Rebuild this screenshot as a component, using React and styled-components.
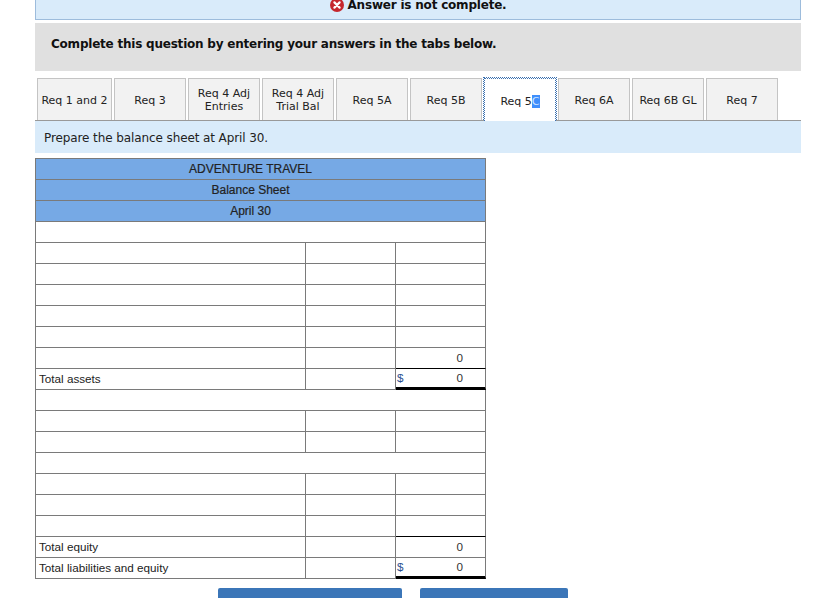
import React from 'react'
import styled, { createGlobalStyle } from 'styled-components'

const tabs = [
  ['Req 1 and 2'],
  ['Req 3'],
  ['Req 4 Adj', 'Entries'],
  ['Req 4 Adj', 'Trial Bal'],
  ['Req 5A'],
  ['Req 5B'],
  ['Req 5C'],
  ['Req 6A'],
  ['Req 6B GL'],
  ['Req 7'],
]

const App = () => {
  return (
    <Page>
      <GlobalStyle />
      <Banner>
        <ErrorIcon viewBox="0 0 14 14">
          <circle cx="7" cy="7" r="7" fill="#c5272d" />
          <path d="M4.4 4.4l5.2 5.2M9.6 4.4l-5.2 5.2" stroke="#fff" strokeWidth="2.2" strokeLinecap="round" />
        </ErrorIcon>
        <BannerText>Answer is not complete.</BannerText>
      </Banner>
      <Instruction>Complete this question by entering your answers in the tabs below.</Instruction>
      <TabBar>
        {tabs.map((lines, i) => (
          <Tab key={lines.join()} $first={i === 0} $active={i === 6} $stacked={lines.length > 1}>
            {i === 6 ? (
              <span>Req 5<Selected>C</Selected></span>
            ) : (
              lines.map((line) => <span key={line}>{line}</span>)
            )}
          </Tab>
        ))}
      </TabBar>
      <Prompt>Prepare the balance sheet at April 30.</Prompt>
      <Sheet>
        <colgroup>
          <col width="270" />
          <col width="90" />
          <col width="90" />
        </colgroup>
        <tbody>
          <HeadRow><td colSpan="3">ADVENTURE TRAVEL</td></HeadRow>
          <HeadRow><td colSpan="3">Balance Sheet</td></HeadRow>
          <HeadRow><td colSpan="3">April 30</td></HeadRow>
          <WideRow />
          <BlankRow />
          <BlankRow />
          <BlankRow />
          <BlankRow />
          <BlankRow />
          <AmountRow value="0" rule="thin" />
          <AmountRow label="Total assets" value="0" dollar rule="thick" />
          <WideRow />
          <BlankRow />
          <BlankRow />
          <WideRow />
          <BlankRow />
          <BlankRow />
          <BlankRow rule="thin" />
          <AmountRow label="Total equity" value="0" />
          <AmountRow label="Total liabilities and equity" value="0" dollar rule="thick" />
        </tbody>
      </Sheet>
      <Buttons>
        <ActionButton $width={184} />
        <ActionButton $width={148} />
      </Buttons>
    </Page>
  )
}

export default App

const WideRow = () => (
  <Row><td colSpan="3" /></Row>
)

const BlankRow = ({ rule }) => (
  <Row>
    <td />
    <td />
    <AmountCell $rule={rule} />
  </Row>
)

const AmountRow = ({ label, value, dollar, rule }) => (
  <Row>
    <LabelCell>{label}</LabelCell>
    <td />
    <AmountCell $rule={rule}>
      <Amount>
        <Dollar>{dollar ? '$' : ''}</Dollar>
        <span>{value}</span>
      </Amount>
    </AmountCell>
  </Row>
)

const GlobalStyle = createGlobalStyle`
html, body {
  margin: 0;
  padding: 0;
  background: #fff;
  overflow: hidden;
}
body {
  height: 598px;
  font-family: "DejaVu Sans", Verdana, sans-serif;
}
`

const Page = styled.div`
width: 825px;
height: 598px;
overflow: hidden;
padding-left: 35px;
box-sizing: border-box;
`

const Banner = styled.div`
width: 766px;
height: 20px;
box-sizing: border-box;
background: #d9ebfa;
border: 1px solid #9dbcdc;
border-top: 0;
display: flex;
justify-content: center;
align-items: flex-start;
gap: 4px;
overflow: hidden;
`

const BannerText = styled.span`
margin-top: -3px;
font-size: 12px;
line-height: 16px;
font-weight: 700;
letter-spacing: -0.2px;
color: #111;
`

const ErrorIcon = styled.svg`
width: 14px;
height: 14px;
margin-top: -2px;
flex: none;
`

const Instruction = styled.div`
width: 766px;
height: 48px;
margin-top: 3px;
box-sizing: border-box;
padding: 13px 16px 0;
background: #e0e0e0;
font-size: 12px;
line-height: 16px;
font-weight: 700;
letter-spacing: -0.22px;
color: #111;
`

const TabBar = styled.div`
width: 766px;
height: 43px;
margin-top: 7px;
box-sizing: border-box;
padding-left: 2px;
display: flex;
gap: 2px;
align-items: flex-end;
border-bottom: 1px solid #999;
`

const Tab = styled.div`
width: ${(p) => (p.$first ? 75 : 72)}px;
height: ${(p) => (p.$active ? 43 : 42)}px;
box-sizing: border-box;
padding-top: ${(p) => (p.$stacked ? 0 : 2)}px;
display: flex;
flex-direction: column;
align-items: center;
justify-content: center;
font-size: 11px;
line-height: 13px;
color: #222;
background: ${(p) => (p.$active ? '#fff' : '#f2f2f2')};
border: 1px ${(p) => (p.$active ? 'dotted #3a70b0' : 'solid #c4c4c4')};
border-bottom: 0;
position: relative;
z-index: ${(p) => (p.$active ? 1 : 0)};
margin-bottom: ${(p) => (p.$active ? '-1px' : '0')};
outline: ${(p) => (p.$active ? '1px dotted #3a70b0' : 'none')};
clip-path: ${(p) => (p.$active ? 'inset(-1px -1px 0 -1px)' : 'none')};
`

const Selected = styled.span`
background: #3f8ffc;
color: #cfe4ff;
`

const Prompt = styled.div`
width: 766px;
height: 32px;
box-sizing: border-box;
padding: 9px 9px 0;
background: #d9ebfa;
font-size: 12px;
line-height: 16px;
letter-spacing: -0.1px;
color: #222;
`

const Sheet = styled.table`
width: 451px;
margin-top: 5px;
border-collapse: separate;
border-spacing: 0;
border-top: 1px solid #7a7a7a;
border-left: 1px solid #7a7a7a;
table-layout: fixed;
font-family: "Liberation Sans", Arial, sans-serif;
font-size: 11.7px;
color: #222;
td {
  height: 21px;
  padding: 0;
  border-right: 1px solid #7a7a7a;
  border-bottom: 1px solid #7a7a7a;
  box-sizing: border-box;
}
`

const HeadRow = styled.tr`
background: #76a9e5;
text-align: center;
td {
  line-height: 20px;
  padding-right: 20px;
  font-size: 12px;
  -webkit-text-stroke: 0.2px #222;
}
`

const Row = styled.tr`
background: #fff;
`

const LabelCell = styled.td`
padding-left: 3px !important;
line-height: 20px;
`

const ruleStyles = {
  thin: '1px solid #000',
  thick: '3px solid #000',
}

const AmountCell = styled.td`
border-bottom: ${(p) => ruleStyles[p.$rule] || '1px solid #7a7a7a'} !important;
`

const Amount = styled.div`
display: flex;
justify-content: space-between;
padding: 0 22px 0 1px;
line-height: 18px;
color: #333;
`

const Dollar = styled.span`
color: #2a4f8f;
`

const Buttons = styled.div`
display: flex;
gap: 18px;
margin-top: 9px;
padding-left: 183px;
`

const ActionButton = styled.div`
width: ${(p) => p.$width}px;
height: 30px;
background: #3b76b8;
border-radius: 2px 2px 0 0;
`
